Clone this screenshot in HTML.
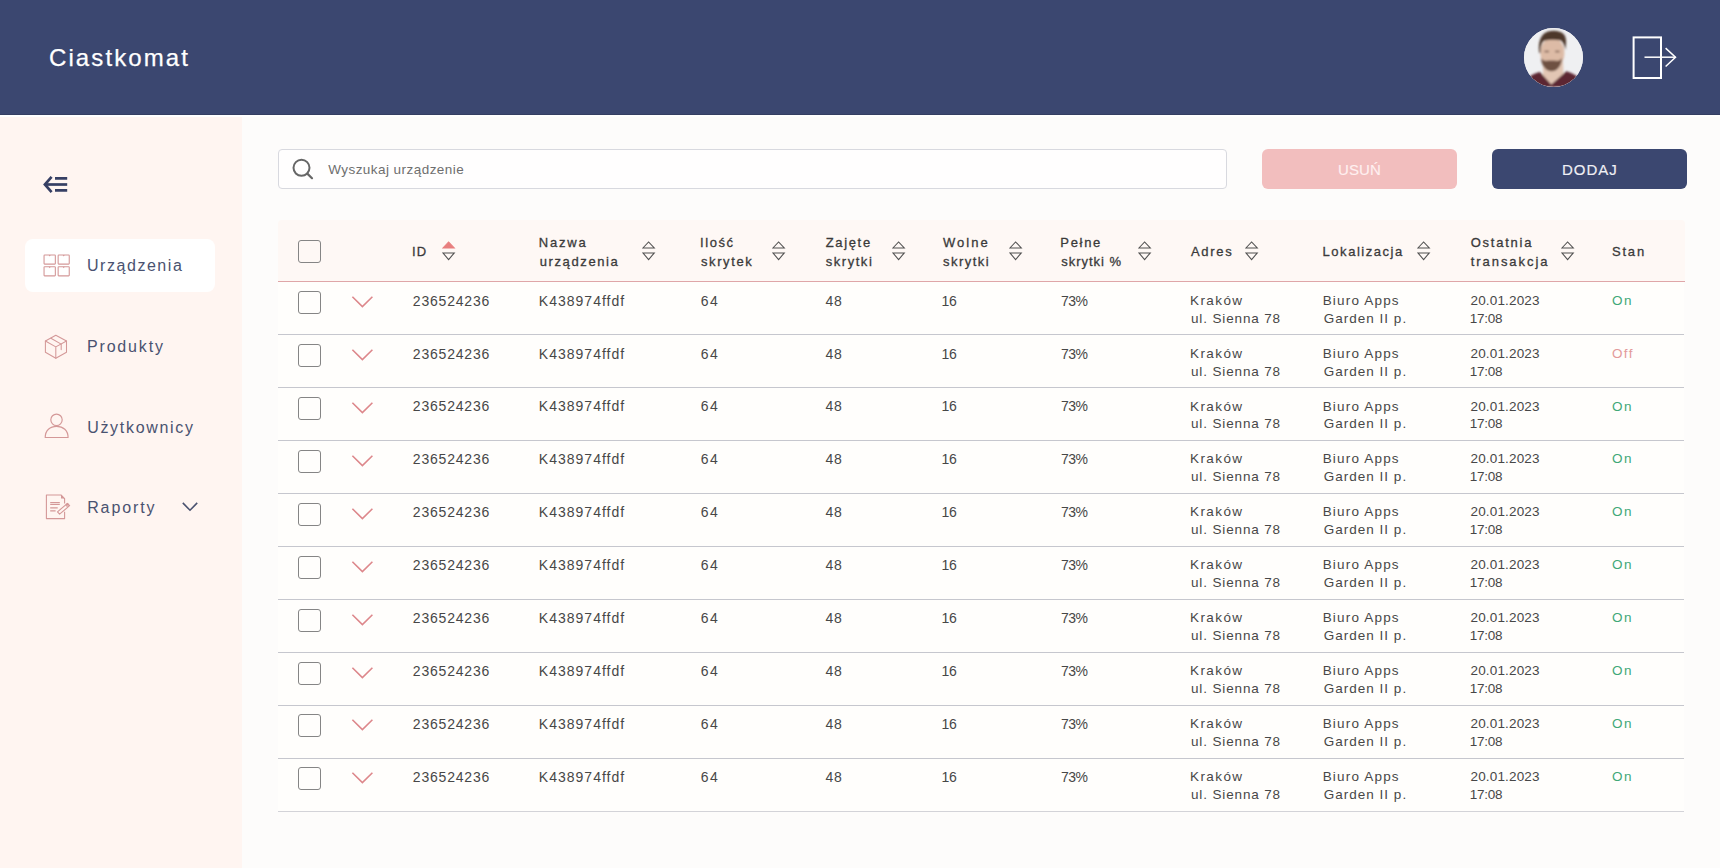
<!DOCTYPE html>
<html><head><meta charset="utf-8"><title>Ciastkomat</title>
<style>
*{box-sizing:border-box}
html,body{margin:0;padding:0}
body{width:1720px;height:868px;overflow:hidden;position:relative;background:#FDFCFB;font-family:"Liberation Sans", sans-serif;}
.t{position:absolute;white-space:nowrap}
.abs{position:absolute}
.hdr{position:absolute;left:0;top:0;width:1720px;height:115px;background:#3B4770;border-bottom:1px solid #343E62}
.hwhite{position:absolute;left:0;top:115px;width:1720px;height:2px;background:#FFFFFF}
.avatar{position:absolute;left:1524px;top:28px;width:59px;height:59px;border-radius:50%;overflow:hidden;background:#EEF0F2}
.side{position:absolute;left:0;top:117px;width:242px;height:751px;background:#FFF5F1}
.card{position:absolute;left:25px;top:239px;width:190px;height:53px;border-radius:8px;background:#fff}
.search{position:absolute;left:278px;top:149px;width:949px;height:40px;border:1px solid #D8D9DF;border-radius:4px;background:#FFFEFE}
.btn{position:absolute;top:149px;height:40px;border-radius:6px}
.thead{position:absolute;left:278px;top:220px;width:1407px;height:62px;background:#FEF8F5;border-radius:4px 4px 0 0;border-bottom:1px solid #DFA6A8}
.cb{position:absolute;left:298px;width:23px;height:23px;border:1.5px solid #858585;border-radius:3px}
.line{position:absolute;left:278px;width:1406px;height:1px;background:#C6C7CE}
</style></head><body>
<div class="hdr"></div>
<div class="hwhite"></div>
<div class="avatar">
  <svg width="59" height="59" viewBox="0 0 59 59">
   <defs><filter id="bl" x="-20%" y="-20%" width="140%" height="140%"><feGaussianBlur stdDeviation="0.9"/></filter></defs>
   <rect width="59" height="59" fill="#EFF0F2"/>
   <g filter="url(#bl)">
   <path d="M19 34 L39 34 L40 58 L19 58 Z" fill="#E2C6B4"/>
   <path d="M3 51 C8 46 12.5 44.8 16 44 L27.3 56.5 L42.3 43.2 C46 44.2 51 46.5 57 51 L59 59 L0 59 Z" fill="#5C2531"/>
   <ellipse cx="28.4" cy="25" rx="12" ry="15.5" fill="#DDBBA6"/>
   <path d="M17 30 C17.5 37.5 21.5 43 27.6 43.3 C33.8 43 37.6 37.5 38 30 C36.5 32.2 34.5 33 32 32.8 C30.2 32.5 28.8 32.3 27.6 32.5 C26.2 32.3 24.6 32.5 22.8 32.8 C20.3 33 18.4 32 17 30 Z" fill="#6E5142"/>
   <path d="M15.2 25 C13.6 12 18 5.5 24 3.6 C30 2 37 3 40 6.5 C42.5 9.5 42.6 15 41.2 22 C40.4 17 39 13.5 36 12.3 C31 11.4 25 11.4 20 12.8 C17.6 14.2 16.6 19 16.5 25 Z" fill="#4E372B"/>
   <path d="M20.5 23.5 H25 M31.2 23.5 H35.5" stroke="#7A5C50" stroke-width="1.4"/>
   </g>
  </svg>
</div>
<svg class="abs" style="left:1630px;top:34px" width="50" height="47" viewBox="0 0 50 47">
  <rect x="3.6" y="3.4" width="27.4" height="40.6" fill="none" stroke="#fff" stroke-width="2"/>
  <path d="M14.5 23.2 H45.5" stroke="#fff" stroke-width="1.5"/>
  <path d="M35.6 14.1 L45.5 23.2 L35.6 32.5" fill="none" stroke="#fff" stroke-width="1.5"/>
</svg>
<div class="side"></div>
<svg class="abs" style="left:40px;top:174px" width="30" height="22" viewBox="0 0 30 22">
 <path d="M10.7 3.9 L4.9 10.5 L10.7 17.1" fill="none" stroke="#363F64" stroke-width="2.7" stroke-linecap="square"/>
 <path d="M6 10.5 H27.2" stroke="#363F64" stroke-width="2.7"/>
 <path d="M15 4.4 H27.2 M15 16.4 H27.2" stroke="#363F64" stroke-width="2.7"/>
</svg>
<div class="card"></div>
<svg class="abs" style="left:42px;top:253px" width="30" height="25" viewBox="0 0 30 25">
 <g fill="none" stroke="#D49898" stroke-width="1.1">
  <rect x="2.05" y="2.05" width="11.3" height="9.1" rx="0.6"/>
  <rect x="16.15" y="2.05" width="11.1" height="9.1" rx="0.6"/>
  <rect x="2.05" y="13.75" width="11.3" height="9.1" rx="0.6"/>
  <rect x="16.15" y="13.75" width="11.1" height="9.1" rx="0.6"/>
 </g>
 <g fill="#D49898">
  <path d="M6.7 2 H8.7 L7.7 3.6 Z M20.7 2 H22.7 L21.7 3.6 Z M6.7 13.7 H8.7 L7.7 15.3 Z M20.7 13.7 H22.7 L21.7 15.3 Z"/>
 </g>
</svg>
<svg class="abs" style="left:38px;top:330px" width="36" height="34" viewBox="0 0 36 34">
 <g fill="none" stroke="#D49898" stroke-width="1.05" stroke-linejoin="round" stroke-linecap="round">
  <path d="M17.8 5.3 L28.5 11 L28.5 22.3 L17.8 28.2 L7.4 22.3 L7.4 11 Z"/>
  <path d="M7.4 11 L17.8 16.9 L28.5 11 M17.8 16.9 V28.2"/>
  <path d="M12.9 8.2 L23.2 14.1 V19.6"/>
 </g>
</svg>
<svg class="abs" style="left:38px;top:408px" width="36" height="36" viewBox="0 0 36 36">
 <g fill="none" stroke="#D49898" stroke-width="1.15">
  <circle cx="18.5" cy="11.8" r="5.7"/>
  <path d="M7.2 29.5 C7.2 22.5 12 18.3 18.6 18.3 C25.2 18.3 30.1 22.5 30.1 29.5 Z" stroke-linejoin="round"/>
 </g>
</svg>
<svg class="abs" style="left:38px;top:488px" width="38" height="36" viewBox="0 0 38 36">
 <g fill="none" stroke="#D49898" stroke-width="1.1" stroke-linejoin="round">
  <path d="M26.6 23.8 V30.6 H8.4 V7 H23 L26.6 10.6 V15.6"/>
  <path d="M12.2 14.5 H21.8 M12.2 16.4 H21.8 M12.2 19.9 H19.7 M12.2 22.8 H17.6" stroke-width="1.2"/>
  <path d="M19.5 23.8 L29.5 15.3 L31.6 17.7 L21.6 26.2 Z"/>
  <circle cx="29.2" cy="17" r="1.1"/>
 </g>
 <path d="M23 7 L26.6 10.6 L23 10.6 Z" fill="#D49898"/>
</svg>
<svg class="abs" style="left:180px;top:500px" width="20" height="13" viewBox="0 0 20 13">
 <path d="M2.8 2.9 L10 10.2 L17.2 2.9" fill="none" stroke="#4A5270" stroke-width="1.6"/>
</svg>
<div class="search"></div>
<svg class="abs" style="left:290px;top:157px" width="26" height="26" viewBox="0 0 26 26">
 <circle cx="11.5" cy="10.8" r="8" fill="none" stroke="#666" stroke-width="2"/>
 <path d="M17.3 16.6 L22 21.2" stroke="#666" stroke-width="2.2" stroke-linecap="round"/>
</svg>
<div class="btn" style="left:1262px;width:195px;background:#F2BEBE"></div>
<div class="btn" style="left:1492px;width:195px;background:#3B4770"></div>
<div class="abs" style="left:278px;top:282px;width:1406px;height:530px;background:#FFFEFC"></div>
<div class="thead"></div>
<div class="cb" style="top:240px"></div>
<svg class="abs" style="left:441.5px;top:240px" width="14" height="22" viewBox="0 0 14 22">
<path d="M0.9 8.0 L6.6 1.9 L12.3 8.0 Z" fill="#E87F7F" stroke="#E87F7F" stroke-width="1.05" stroke-linejoin="miter"/>
<path d="M0.9 12.9 L6.6 19.6 L12.3 12.9 Z" fill="none" stroke="#505050" stroke-width="1.05" stroke-linejoin="miter"/>
</svg><svg class="abs" style="left:641.5px;top:240px" width="14" height="22" viewBox="0 0 14 22">
<path d="M0.9 8.0 L6.6 1.9 L12.3 8.0 Z" fill="none" stroke="#505050" stroke-width="1.05" stroke-linejoin="miter"/>
<path d="M0.9 12.9 L6.6 19.6 L12.3 12.9 Z" fill="none" stroke="#505050" stroke-width="1.05" stroke-linejoin="miter"/>
</svg><svg class="abs" style="left:771.5px;top:240px" width="14" height="22" viewBox="0 0 14 22">
<path d="M0.9 8.0 L6.6 1.9 L12.3 8.0 Z" fill="none" stroke="#505050" stroke-width="1.05" stroke-linejoin="miter"/>
<path d="M0.9 12.9 L6.6 19.6 L12.3 12.9 Z" fill="none" stroke="#505050" stroke-width="1.05" stroke-linejoin="miter"/>
</svg><svg class="abs" style="left:891.5px;top:240px" width="14" height="22" viewBox="0 0 14 22">
<path d="M0.9 8.0 L6.6 1.9 L12.3 8.0 Z" fill="none" stroke="#505050" stroke-width="1.05" stroke-linejoin="miter"/>
<path d="M0.9 12.9 L6.6 19.6 L12.3 12.9 Z" fill="none" stroke="#505050" stroke-width="1.05" stroke-linejoin="miter"/>
</svg><svg class="abs" style="left:1009.2px;top:240px" width="14" height="22" viewBox="0 0 14 22">
<path d="M0.9 8.0 L6.6 1.9 L12.3 8.0 Z" fill="none" stroke="#505050" stroke-width="1.05" stroke-linejoin="miter"/>
<path d="M0.9 12.9 L6.6 19.6 L12.3 12.9 Z" fill="none" stroke="#505050" stroke-width="1.05" stroke-linejoin="miter"/>
</svg><svg class="abs" style="left:1138.2px;top:240px" width="14" height="22" viewBox="0 0 14 22">
<path d="M0.9 8.0 L6.6 1.9 L12.3 8.0 Z" fill="none" stroke="#505050" stroke-width="1.05" stroke-linejoin="miter"/>
<path d="M0.9 12.9 L6.6 19.6 L12.3 12.9 Z" fill="none" stroke="#505050" stroke-width="1.05" stroke-linejoin="miter"/>
</svg><svg class="abs" style="left:1245.3px;top:240px" width="14" height="22" viewBox="0 0 14 22">
<path d="M0.9 8.0 L6.6 1.9 L12.3 8.0 Z" fill="none" stroke="#505050" stroke-width="1.05" stroke-linejoin="miter"/>
<path d="M0.9 12.9 L6.6 19.6 L12.3 12.9 Z" fill="none" stroke="#505050" stroke-width="1.05" stroke-linejoin="miter"/>
</svg><svg class="abs" style="left:1416.6px;top:240px" width="14" height="22" viewBox="0 0 14 22">
<path d="M0.9 8.0 L6.6 1.9 L12.3 8.0 Z" fill="none" stroke="#505050" stroke-width="1.05" stroke-linejoin="miter"/>
<path d="M0.9 12.9 L6.6 19.6 L12.3 12.9 Z" fill="none" stroke="#505050" stroke-width="1.05" stroke-linejoin="miter"/>
</svg><svg class="abs" style="left:1560.6px;top:240px" width="14" height="22" viewBox="0 0 14 22">
<path d="M0.9 8.0 L6.6 1.9 L12.3 8.0 Z" fill="none" stroke="#505050" stroke-width="1.05" stroke-linejoin="miter"/>
<path d="M0.9 12.9 L6.6 19.6 L12.3 12.9 Z" fill="none" stroke="#505050" stroke-width="1.05" stroke-linejoin="miter"/>
</svg>
<div class="cb" style="top:291px"></div><svg class="abs" style="left:351px;top:295px" width="23" height="14" viewBox="0 0 23 14"><path d="M1.4 1.8 L11.4 11.6 L21.4 1.8" fill="none" stroke="#DD878B" stroke-width="1.6"/></svg><div class="line" style="top:334px;background:#C6C7CE"></div><div class="cb" style="top:344px"></div><svg class="abs" style="left:351px;top:348px" width="23" height="14" viewBox="0 0 23 14"><path d="M1.4 1.8 L11.4 11.6 L21.4 1.8" fill="none" stroke="#DD878B" stroke-width="1.6"/></svg><div class="line" style="top:387px;background:#C6C7CE"></div><div class="cb" style="top:397px"></div><svg class="abs" style="left:351px;top:401px" width="23" height="14" viewBox="0 0 23 14"><path d="M1.4 1.8 L11.4 11.6 L21.4 1.8" fill="none" stroke="#DD878B" stroke-width="1.6"/></svg><div class="line" style="top:440px;background:#C6C7CE"></div><div class="cb" style="top:450px"></div><svg class="abs" style="left:351px;top:454px" width="23" height="14" viewBox="0 0 23 14"><path d="M1.4 1.8 L11.4 11.6 L21.4 1.8" fill="none" stroke="#DD878B" stroke-width="1.6"/></svg><div class="line" style="top:493px;background:#C6C7CE"></div><div class="cb" style="top:503px"></div><svg class="abs" style="left:351px;top:507px" width="23" height="14" viewBox="0 0 23 14"><path d="M1.4 1.8 L11.4 11.6 L21.4 1.8" fill="none" stroke="#DD878B" stroke-width="1.6"/></svg><div class="line" style="top:546px;background:#C6C7CE"></div><div class="cb" style="top:556px"></div><svg class="abs" style="left:351px;top:560px" width="23" height="14" viewBox="0 0 23 14"><path d="M1.4 1.8 L11.4 11.6 L21.4 1.8" fill="none" stroke="#DD878B" stroke-width="1.6"/></svg><div class="line" style="top:599px;background:#C6C7CE"></div><div class="cb" style="top:609px"></div><svg class="abs" style="left:351px;top:613px" width="23" height="14" viewBox="0 0 23 14"><path d="M1.4 1.8 L11.4 11.6 L21.4 1.8" fill="none" stroke="#DD878B" stroke-width="1.6"/></svg><div class="line" style="top:652px;background:#C6C7CE"></div><div class="cb" style="top:662px"></div><svg class="abs" style="left:351px;top:666px" width="23" height="14" viewBox="0 0 23 14"><path d="M1.4 1.8 L11.4 11.6 L21.4 1.8" fill="none" stroke="#DD878B" stroke-width="1.6"/></svg><div class="line" style="top:705px;background:#C6C7CE"></div><div class="cb" style="top:714px"></div><svg class="abs" style="left:351px;top:718px" width="23" height="14" viewBox="0 0 23 14"><path d="M1.4 1.8 L11.4 11.6 L21.4 1.8" fill="none" stroke="#DD878B" stroke-width="1.6"/></svg><div class="line" style="top:758px;background:#C6C7CE"></div><div class="cb" style="top:767px"></div><svg class="abs" style="left:351px;top:771px" width="23" height="14" viewBox="0 0 23 14"><path d="M1.4 1.8 L11.4 11.6 L21.4 1.8" fill="none" stroke="#DD878B" stroke-width="1.6"/></svg><div class="line" style="top:811px;background:#D3D3D8"></div>
<div class="t" style="left:49.00px;top:41px;font-size:24px;line-height:34px;color:#FFFFFF;letter-spacing:2.093px;-webkit-text-stroke:0.25px #FFFFFF">Ciastkomat</div>
<div class="t" style="left:87.00px;top:254px;font-size:16px;line-height:23px;color:#4A5270;letter-spacing:1.541px">Urządzenia</div>
<div class="t" style="left:87.00px;top:335px;font-size:16px;line-height:23px;color:#4A5270;letter-spacing:1.823px">Produkty</div>
<div class="t" style="left:87.20px;top:416px;font-size:16px;line-height:23px;color:#4A5270;letter-spacing:1.689px">Użytkownicy</div>
<div class="t" style="left:87.20px;top:496px;font-size:16px;line-height:23px;color:#4A5270;letter-spacing:1.879px">Raporty</div>
<div class="t" style="left:328.20px;top:160px;font-size:13.5px;line-height:19px;color:#6E6E6E;letter-spacing:0.449px">Wyszukaj urządzenie</div>
<div class="t" style="left:1338.10px;top:159px;font-size:15px;line-height:21px;color:#FFF0F0;letter-spacing:0.077px;-webkit-text-stroke:0.15px #FFF0F0">USUŃ</div>
<div class="t" style="left:1562.00px;top:159px;font-size:15px;line-height:21px;color:#F0F0F5;letter-spacing:0.966px;-webkit-text-stroke:0.15px #F0F0F5">DODAJ</div>
<div class="t" style="left:412.00px;top:242px;font-size:13px;line-height:19px;color:#3A3A3A;letter-spacing:1.188px;-webkit-text-stroke:0.3px #3A3A3A">ID</div>
<div class="t" style="left:538.70px;top:233px;font-size:13px;line-height:19px;color:#3A3A3A;letter-spacing:1.823px;-webkit-text-stroke:0.3px #3A3A3A">Nazwa</div>
<div class="t" style="left:539.70px;top:252px;font-size:13px;line-height:19px;color:#3A3A3A;letter-spacing:1.615px;-webkit-text-stroke:0.3px #3A3A3A">urządzenia</div>
<div class="t" style="left:700.00px;top:233px;font-size:13px;line-height:19px;color:#3A3A3A;letter-spacing:1.568px;-webkit-text-stroke:0.3px #3A3A3A">Ilość</div>
<div class="t" style="left:701.00px;top:252px;font-size:13px;line-height:19px;color:#3A3A3A;letter-spacing:1.588px;-webkit-text-stroke:0.3px #3A3A3A">skrytek</div>
<div class="t" style="left:825.70px;top:233px;font-size:13px;line-height:19px;color:#3A3A3A;letter-spacing:1.660px;-webkit-text-stroke:0.3px #3A3A3A">Zajęte</div>
<div class="t" style="left:825.70px;top:252px;font-size:13px;line-height:19px;color:#3A3A3A;letter-spacing:1.543px;-webkit-text-stroke:0.3px #3A3A3A">skrytki</div>
<div class="t" style="left:943.00px;top:233px;font-size:13px;line-height:19px;color:#3A3A3A;letter-spacing:2.029px;-webkit-text-stroke:0.3px #3A3A3A">Wolne</div>
<div class="t" style="left:943.00px;top:252px;font-size:13px;line-height:19px;color:#3A3A3A;letter-spacing:1.477px;-webkit-text-stroke:0.3px #3A3A3A">skrytki</div>
<div class="t" style="left:1060.30px;top:233px;font-size:13px;line-height:19px;color:#3A3A3A;letter-spacing:1.695px;-webkit-text-stroke:0.3px #3A3A3A">Pełne</div>
<div class="t" style="left:1061.30px;top:252px;font-size:13px;line-height:19px;color:#3A3A3A;letter-spacing:0.970px;-webkit-text-stroke:0.3px #3A3A3A">skrytki %</div>
<div class="t" style="left:1190.90px;top:242px;font-size:13px;line-height:19px;color:#3A3A3A;letter-spacing:1.710px;-webkit-text-stroke:0.3px #3A3A3A">Adres</div>
<div class="t" style="left:1322.60px;top:242px;font-size:13px;line-height:19px;color:#3A3A3A;letter-spacing:1.532px;-webkit-text-stroke:0.3px #3A3A3A">Lokalizacja</div>
<div class="t" style="left:1470.70px;top:233px;font-size:13px;line-height:19px;color:#3A3A3A;letter-spacing:1.759px;-webkit-text-stroke:0.3px #3A3A3A">Ostatnia</div>
<div class="t" style="left:1470.70px;top:252px;font-size:13px;line-height:19px;color:#3A3A3A;letter-spacing:1.953px;-webkit-text-stroke:0.3px #3A3A3A">transakcja</div>
<div class="t" style="left:1612.00px;top:242px;font-size:13px;line-height:19px;color:#3A3A3A;letter-spacing:1.796px;-webkit-text-stroke:0.3px #3A3A3A">Stan</div>
<div class="t" style="left:412.80px;top:291px;font-size:14px;line-height:20px;color:#474747;letter-spacing:0.801px">236524236</div>
<div class="t" style="left:538.80px;top:291px;font-size:14px;line-height:20px;color:#474747;letter-spacing:1.013px">K438974ffdf</div>
<div class="t" style="left:700.70px;top:291px;font-size:14px;line-height:20px;color:#474747;letter-spacing:1.414px">64</div>
<div class="t" style="left:825.40px;top:291px;font-size:14px;line-height:20px;color:#474747;letter-spacing:0.814px">48</div>
<div class="t" style="left:941.60px;top:291px;font-size:14px;line-height:20px;color:#474747;letter-spacing:-0.500px">16</div>
<div class="t" style="left:1060.90px;top:291px;font-size:14px;line-height:20px;color:#474747;letter-spacing:-0.500px">73%</div>
<div class="t" style="left:1190.00px;top:291px;font-size:13.5px;line-height:19px;color:#474747;letter-spacing:1.407px">Kraków</div>
<div class="t" style="left:1191.00px;top:309px;font-size:13.5px;line-height:19px;color:#474747;letter-spacing:0.858px">ul. Sienna 78</div>
<div class="t" style="left:1322.70px;top:291px;font-size:13.5px;line-height:19px;color:#474747;letter-spacing:1.179px">Biuro Apps</div>
<div class="t" style="left:1323.70px;top:309px;font-size:13.5px;line-height:19px;color:#474747;letter-spacing:1.015px">Garden II p.</div>
<div class="t" style="left:1470.50px;top:291px;font-size:13.5px;line-height:19px;color:#474747;letter-spacing:0.160px">20.01.2023</div>
<div class="t" style="left:1469.70px;top:309px;font-size:13.5px;line-height:19px;color:#474747;letter-spacing:-0.219px">17:08</div>
<div class="t" style="left:1611.90px;top:291px;font-size:13.5px;line-height:19px;color:#40A878;letter-spacing:1.599px">On</div>
<div class="t" style="left:412.80px;top:344px;font-size:14px;line-height:20px;color:#474747;letter-spacing:0.801px">236524236</div>
<div class="t" style="left:538.80px;top:344px;font-size:14px;line-height:20px;color:#474747;letter-spacing:1.013px">K438974ffdf</div>
<div class="t" style="left:700.70px;top:344px;font-size:14px;line-height:20px;color:#474747;letter-spacing:1.414px">64</div>
<div class="t" style="left:825.40px;top:344px;font-size:14px;line-height:20px;color:#474747;letter-spacing:0.814px">48</div>
<div class="t" style="left:941.60px;top:344px;font-size:14px;line-height:20px;color:#474747;letter-spacing:-0.500px">16</div>
<div class="t" style="left:1060.90px;top:344px;font-size:14px;line-height:20px;color:#474747;letter-spacing:-0.500px">73%</div>
<div class="t" style="left:1190.00px;top:344px;font-size:13.5px;line-height:19px;color:#474747;letter-spacing:1.407px">Kraków</div>
<div class="t" style="left:1191.00px;top:362px;font-size:13.5px;line-height:19px;color:#474747;letter-spacing:0.858px">ul. Sienna 78</div>
<div class="t" style="left:1322.70px;top:344px;font-size:13.5px;line-height:19px;color:#474747;letter-spacing:1.179px">Biuro Apps</div>
<div class="t" style="left:1323.70px;top:362px;font-size:13.5px;line-height:19px;color:#474747;letter-spacing:1.015px">Garden II p.</div>
<div class="t" style="left:1470.50px;top:344px;font-size:13.5px;line-height:19px;color:#474747;letter-spacing:0.160px">20.01.2023</div>
<div class="t" style="left:1469.70px;top:362px;font-size:13.5px;line-height:19px;color:#474747;letter-spacing:-0.219px">17:08</div>
<div class="t" style="left:1611.90px;top:344px;font-size:13.5px;line-height:19px;color:#E39A9A;letter-spacing:1.396px">Off</div>
<div class="t" style="left:412.80px;top:396px;font-size:14px;line-height:20px;color:#474747;letter-spacing:0.801px">236524236</div>
<div class="t" style="left:538.80px;top:396px;font-size:14px;line-height:20px;color:#474747;letter-spacing:1.013px">K438974ffdf</div>
<div class="t" style="left:700.70px;top:396px;font-size:14px;line-height:20px;color:#474747;letter-spacing:1.414px">64</div>
<div class="t" style="left:825.40px;top:396px;font-size:14px;line-height:20px;color:#474747;letter-spacing:0.814px">48</div>
<div class="t" style="left:941.60px;top:396px;font-size:14px;line-height:20px;color:#474747;letter-spacing:-0.500px">16</div>
<div class="t" style="left:1060.90px;top:396px;font-size:14px;line-height:20px;color:#474747;letter-spacing:-0.500px">73%</div>
<div class="t" style="left:1190.00px;top:397px;font-size:13.5px;line-height:19px;color:#474747;letter-spacing:1.407px">Kraków</div>
<div class="t" style="left:1191.00px;top:414px;font-size:13.5px;line-height:19px;color:#474747;letter-spacing:0.858px">ul. Sienna 78</div>
<div class="t" style="left:1322.70px;top:397px;font-size:13.5px;line-height:19px;color:#474747;letter-spacing:1.179px">Biuro Apps</div>
<div class="t" style="left:1323.70px;top:414px;font-size:13.5px;line-height:19px;color:#474747;letter-spacing:1.015px">Garden II p.</div>
<div class="t" style="left:1470.50px;top:397px;font-size:13.5px;line-height:19px;color:#474747;letter-spacing:0.160px">20.01.2023</div>
<div class="t" style="left:1469.70px;top:414px;font-size:13.5px;line-height:19px;color:#474747;letter-spacing:-0.219px">17:08</div>
<div class="t" style="left:1611.90px;top:397px;font-size:13.5px;line-height:19px;color:#40A878;letter-spacing:1.599px">On</div>
<div class="t" style="left:412.80px;top:449px;font-size:14px;line-height:20px;color:#474747;letter-spacing:0.801px">236524236</div>
<div class="t" style="left:538.80px;top:449px;font-size:14px;line-height:20px;color:#474747;letter-spacing:1.013px">K438974ffdf</div>
<div class="t" style="left:700.70px;top:449px;font-size:14px;line-height:20px;color:#474747;letter-spacing:1.414px">64</div>
<div class="t" style="left:825.40px;top:449px;font-size:14px;line-height:20px;color:#474747;letter-spacing:0.814px">48</div>
<div class="t" style="left:941.60px;top:449px;font-size:14px;line-height:20px;color:#474747;letter-spacing:-0.500px">16</div>
<div class="t" style="left:1060.90px;top:449px;font-size:14px;line-height:20px;color:#474747;letter-spacing:-0.500px">73%</div>
<div class="t" style="left:1190.00px;top:449px;font-size:13.5px;line-height:19px;color:#474747;letter-spacing:1.407px">Kraków</div>
<div class="t" style="left:1191.00px;top:467px;font-size:13.5px;line-height:19px;color:#474747;letter-spacing:0.858px">ul. Sienna 78</div>
<div class="t" style="left:1322.70px;top:449px;font-size:13.5px;line-height:19px;color:#474747;letter-spacing:1.179px">Biuro Apps</div>
<div class="t" style="left:1323.70px;top:467px;font-size:13.5px;line-height:19px;color:#474747;letter-spacing:1.015px">Garden II p.</div>
<div class="t" style="left:1470.50px;top:449px;font-size:13.5px;line-height:19px;color:#474747;letter-spacing:0.160px">20.01.2023</div>
<div class="t" style="left:1469.70px;top:467px;font-size:13.5px;line-height:19px;color:#474747;letter-spacing:-0.219px">17:08</div>
<div class="t" style="left:1611.90px;top:449px;font-size:13.5px;line-height:19px;color:#40A878;letter-spacing:1.599px">On</div>
<div class="t" style="left:412.80px;top:502px;font-size:14px;line-height:20px;color:#474747;letter-spacing:0.801px">236524236</div>
<div class="t" style="left:538.80px;top:502px;font-size:14px;line-height:20px;color:#474747;letter-spacing:1.013px">K438974ffdf</div>
<div class="t" style="left:700.70px;top:502px;font-size:14px;line-height:20px;color:#474747;letter-spacing:1.414px">64</div>
<div class="t" style="left:825.40px;top:502px;font-size:14px;line-height:20px;color:#474747;letter-spacing:0.814px">48</div>
<div class="t" style="left:941.60px;top:502px;font-size:14px;line-height:20px;color:#474747;letter-spacing:-0.500px">16</div>
<div class="t" style="left:1060.90px;top:502px;font-size:14px;line-height:20px;color:#474747;letter-spacing:-0.500px">73%</div>
<div class="t" style="left:1190.00px;top:502px;font-size:13.5px;line-height:19px;color:#474747;letter-spacing:1.407px">Kraków</div>
<div class="t" style="left:1191.00px;top:520px;font-size:13.5px;line-height:19px;color:#474747;letter-spacing:0.858px">ul. Sienna 78</div>
<div class="t" style="left:1322.70px;top:502px;font-size:13.5px;line-height:19px;color:#474747;letter-spacing:1.179px">Biuro Apps</div>
<div class="t" style="left:1323.70px;top:520px;font-size:13.5px;line-height:19px;color:#474747;letter-spacing:1.015px">Garden II p.</div>
<div class="t" style="left:1470.50px;top:502px;font-size:13.5px;line-height:19px;color:#474747;letter-spacing:0.160px">20.01.2023</div>
<div class="t" style="left:1469.70px;top:520px;font-size:13.5px;line-height:19px;color:#474747;letter-spacing:-0.219px">17:08</div>
<div class="t" style="left:1611.90px;top:502px;font-size:13.5px;line-height:19px;color:#40A878;letter-spacing:1.599px">On</div>
<div class="t" style="left:412.80px;top:555px;font-size:14px;line-height:20px;color:#474747;letter-spacing:0.801px">236524236</div>
<div class="t" style="left:538.80px;top:555px;font-size:14px;line-height:20px;color:#474747;letter-spacing:1.013px">K438974ffdf</div>
<div class="t" style="left:700.70px;top:555px;font-size:14px;line-height:20px;color:#474747;letter-spacing:1.414px">64</div>
<div class="t" style="left:825.40px;top:555px;font-size:14px;line-height:20px;color:#474747;letter-spacing:0.814px">48</div>
<div class="t" style="left:941.60px;top:555px;font-size:14px;line-height:20px;color:#474747;letter-spacing:-0.500px">16</div>
<div class="t" style="left:1060.90px;top:555px;font-size:14px;line-height:20px;color:#474747;letter-spacing:-0.500px">73%</div>
<div class="t" style="left:1190.00px;top:555px;font-size:13.5px;line-height:19px;color:#474747;letter-spacing:1.407px">Kraków</div>
<div class="t" style="left:1191.00px;top:573px;font-size:13.5px;line-height:19px;color:#474747;letter-spacing:0.858px">ul. Sienna 78</div>
<div class="t" style="left:1322.70px;top:555px;font-size:13.5px;line-height:19px;color:#474747;letter-spacing:1.179px">Biuro Apps</div>
<div class="t" style="left:1323.70px;top:573px;font-size:13.5px;line-height:19px;color:#474747;letter-spacing:1.015px">Garden II p.</div>
<div class="t" style="left:1470.50px;top:555px;font-size:13.5px;line-height:19px;color:#474747;letter-spacing:0.160px">20.01.2023</div>
<div class="t" style="left:1469.70px;top:573px;font-size:13.5px;line-height:19px;color:#474747;letter-spacing:-0.219px">17:08</div>
<div class="t" style="left:1611.90px;top:555px;font-size:13.5px;line-height:19px;color:#40A878;letter-spacing:1.599px">On</div>
<div class="t" style="left:412.80px;top:608px;font-size:14px;line-height:20px;color:#474747;letter-spacing:0.801px">236524236</div>
<div class="t" style="left:538.80px;top:608px;font-size:14px;line-height:20px;color:#474747;letter-spacing:1.013px">K438974ffdf</div>
<div class="t" style="left:700.70px;top:608px;font-size:14px;line-height:20px;color:#474747;letter-spacing:1.414px">64</div>
<div class="t" style="left:825.40px;top:608px;font-size:14px;line-height:20px;color:#474747;letter-spacing:0.814px">48</div>
<div class="t" style="left:941.60px;top:608px;font-size:14px;line-height:20px;color:#474747;letter-spacing:-0.500px">16</div>
<div class="t" style="left:1060.90px;top:608px;font-size:14px;line-height:20px;color:#474747;letter-spacing:-0.500px">73%</div>
<div class="t" style="left:1190.00px;top:608px;font-size:13.5px;line-height:19px;color:#474747;letter-spacing:1.407px">Kraków</div>
<div class="t" style="left:1191.00px;top:626px;font-size:13.5px;line-height:19px;color:#474747;letter-spacing:0.858px">ul. Sienna 78</div>
<div class="t" style="left:1322.70px;top:608px;font-size:13.5px;line-height:19px;color:#474747;letter-spacing:1.179px">Biuro Apps</div>
<div class="t" style="left:1323.70px;top:626px;font-size:13.5px;line-height:19px;color:#474747;letter-spacing:1.015px">Garden II p.</div>
<div class="t" style="left:1470.50px;top:608px;font-size:13.5px;line-height:19px;color:#474747;letter-spacing:0.160px">20.01.2023</div>
<div class="t" style="left:1469.70px;top:626px;font-size:13.5px;line-height:19px;color:#474747;letter-spacing:-0.219px">17:08</div>
<div class="t" style="left:1611.90px;top:608px;font-size:13.5px;line-height:19px;color:#40A878;letter-spacing:1.599px">On</div>
<div class="t" style="left:412.80px;top:661px;font-size:14px;line-height:20px;color:#474747;letter-spacing:0.801px">236524236</div>
<div class="t" style="left:538.80px;top:661px;font-size:14px;line-height:20px;color:#474747;letter-spacing:1.013px">K438974ffdf</div>
<div class="t" style="left:700.70px;top:661px;font-size:14px;line-height:20px;color:#474747;letter-spacing:1.414px">64</div>
<div class="t" style="left:825.40px;top:661px;font-size:14px;line-height:20px;color:#474747;letter-spacing:0.814px">48</div>
<div class="t" style="left:941.60px;top:661px;font-size:14px;line-height:20px;color:#474747;letter-spacing:-0.500px">16</div>
<div class="t" style="left:1060.90px;top:661px;font-size:14px;line-height:20px;color:#474747;letter-spacing:-0.500px">73%</div>
<div class="t" style="left:1190.00px;top:661px;font-size:13.5px;line-height:19px;color:#474747;letter-spacing:1.407px">Kraków</div>
<div class="t" style="left:1191.00px;top:679px;font-size:13.5px;line-height:19px;color:#474747;letter-spacing:0.858px">ul. Sienna 78</div>
<div class="t" style="left:1322.70px;top:661px;font-size:13.5px;line-height:19px;color:#474747;letter-spacing:1.179px">Biuro Apps</div>
<div class="t" style="left:1323.70px;top:679px;font-size:13.5px;line-height:19px;color:#474747;letter-spacing:1.015px">Garden II p.</div>
<div class="t" style="left:1470.50px;top:661px;font-size:13.5px;line-height:19px;color:#474747;letter-spacing:0.160px">20.01.2023</div>
<div class="t" style="left:1469.70px;top:679px;font-size:13.5px;line-height:19px;color:#474747;letter-spacing:-0.219px">17:08</div>
<div class="t" style="left:1611.90px;top:661px;font-size:13.5px;line-height:19px;color:#40A878;letter-spacing:1.599px">On</div>
<div class="t" style="left:412.80px;top:714px;font-size:14px;line-height:20px;color:#474747;letter-spacing:0.801px">236524236</div>
<div class="t" style="left:538.80px;top:714px;font-size:14px;line-height:20px;color:#474747;letter-spacing:1.013px">K438974ffdf</div>
<div class="t" style="left:700.70px;top:714px;font-size:14px;line-height:20px;color:#474747;letter-spacing:1.414px">64</div>
<div class="t" style="left:825.40px;top:714px;font-size:14px;line-height:20px;color:#474747;letter-spacing:0.814px">48</div>
<div class="t" style="left:941.60px;top:714px;font-size:14px;line-height:20px;color:#474747;letter-spacing:-0.500px">16</div>
<div class="t" style="left:1060.90px;top:714px;font-size:14px;line-height:20px;color:#474747;letter-spacing:-0.500px">73%</div>
<div class="t" style="left:1190.00px;top:714px;font-size:13.5px;line-height:19px;color:#474747;letter-spacing:1.407px">Kraków</div>
<div class="t" style="left:1191.00px;top:732px;font-size:13.5px;line-height:19px;color:#474747;letter-spacing:0.858px">ul. Sienna 78</div>
<div class="t" style="left:1322.70px;top:714px;font-size:13.5px;line-height:19px;color:#474747;letter-spacing:1.179px">Biuro Apps</div>
<div class="t" style="left:1323.70px;top:732px;font-size:13.5px;line-height:19px;color:#474747;letter-spacing:1.015px">Garden II p.</div>
<div class="t" style="left:1470.50px;top:714px;font-size:13.5px;line-height:19px;color:#474747;letter-spacing:0.160px">20.01.2023</div>
<div class="t" style="left:1469.70px;top:732px;font-size:13.5px;line-height:19px;color:#474747;letter-spacing:-0.219px">17:08</div>
<div class="t" style="left:1611.90px;top:714px;font-size:13.5px;line-height:19px;color:#40A878;letter-spacing:1.599px">On</div>
<div class="t" style="left:412.80px;top:767px;font-size:14px;line-height:20px;color:#474747;letter-spacing:0.801px">236524236</div>
<div class="t" style="left:538.80px;top:767px;font-size:14px;line-height:20px;color:#474747;letter-spacing:1.013px">K438974ffdf</div>
<div class="t" style="left:700.70px;top:767px;font-size:14px;line-height:20px;color:#474747;letter-spacing:1.414px">64</div>
<div class="t" style="left:825.40px;top:767px;font-size:14px;line-height:20px;color:#474747;letter-spacing:0.814px">48</div>
<div class="t" style="left:941.60px;top:767px;font-size:14px;line-height:20px;color:#474747;letter-spacing:-0.500px">16</div>
<div class="t" style="left:1060.90px;top:767px;font-size:14px;line-height:20px;color:#474747;letter-spacing:-0.500px">73%</div>
<div class="t" style="left:1190.00px;top:767px;font-size:13.5px;line-height:19px;color:#474747;letter-spacing:1.407px">Kraków</div>
<div class="t" style="left:1191.00px;top:785px;font-size:13.5px;line-height:19px;color:#474747;letter-spacing:0.858px">ul. Sienna 78</div>
<div class="t" style="left:1322.70px;top:767px;font-size:13.5px;line-height:19px;color:#474747;letter-spacing:1.179px">Biuro Apps</div>
<div class="t" style="left:1323.70px;top:785px;font-size:13.5px;line-height:19px;color:#474747;letter-spacing:1.015px">Garden II p.</div>
<div class="t" style="left:1470.50px;top:767px;font-size:13.5px;line-height:19px;color:#474747;letter-spacing:0.160px">20.01.2023</div>
<div class="t" style="left:1469.70px;top:785px;font-size:13.5px;line-height:19px;color:#474747;letter-spacing:-0.219px">17:08</div>
<div class="t" style="left:1611.90px;top:767px;font-size:13.5px;line-height:19px;color:#40A878;letter-spacing:1.599px">On</div>
</body></html>
